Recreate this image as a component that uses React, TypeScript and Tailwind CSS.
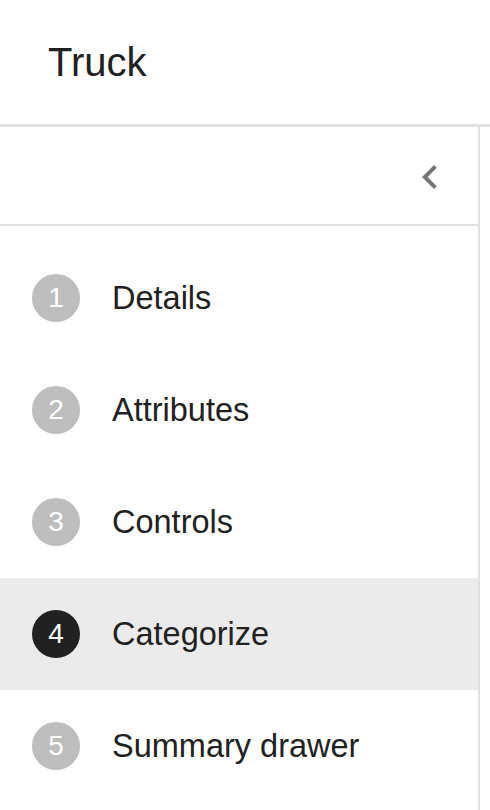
import React from "react";

const steps = [
  { n: 1, label: "Details" },
  { n: 2, label: "Attributes" },
  { n: 3, label: "Controls" },
  { n: 4, label: "Categorize", active: true },
  { n: 5, label: "Summary drawer" },
];

export default function App() {
  return (
    <div
      className="w-[490px] h-[810px] bg-white overflow-hidden flex flex-col text-[#212121]"
      style={{ fontFamily: '"Liberation Sans", Arial, sans-serif' }}
    >
      <div className="h-[124px] shrink-0 flex items-center px-12">
        <span className="text-[40px] leading-none">Truck</span>
      </div>
      <div className="h-[3px] shrink-0 bg-[#e0e0e0]" />
      <div className="flex flex-1 min-h-0">
        <div className="w-[480px] border-r-2 border-[#e0e0e0] flex flex-col">
          <div className="h-[99px] shrink-0 border-b-2 border-[#e0e0e0] flex justify-end items-start pt-[26px] pr-6">
            <svg width="48" height="48" viewBox="0 0 24 24" fill="#757575">
              <path d="M15.41 7.41L14 6l-6 6 6 6 1.41-1.41L10.83 12z" />
            </svg>
          </div>
          <div className="pt-4 flex flex-col">
            {steps.map((s) => (
              <div
                key={s.n}
                className={
                  "h-[112px] shrink-0 flex items-center pl-8 " +
                  (s.active ? "bg-[#ebebeb]" : "")
                }
              >
                <div
                  className={
                    "w-12 h-12 rounded-full flex items-center justify-center text-white text-[28px] leading-none " +
                    (s.active ? "bg-[#212121]" : "bg-[#bdbdbd]")
                  }
                >
                  {s.n}
                </div>
                <span className="ml-8 text-[32.5px] leading-none">{s.label}</span>
              </div>
            ))}
          </div>
        </div>
        <div className="flex-1" />
      </div>
    </div>
  );
}
